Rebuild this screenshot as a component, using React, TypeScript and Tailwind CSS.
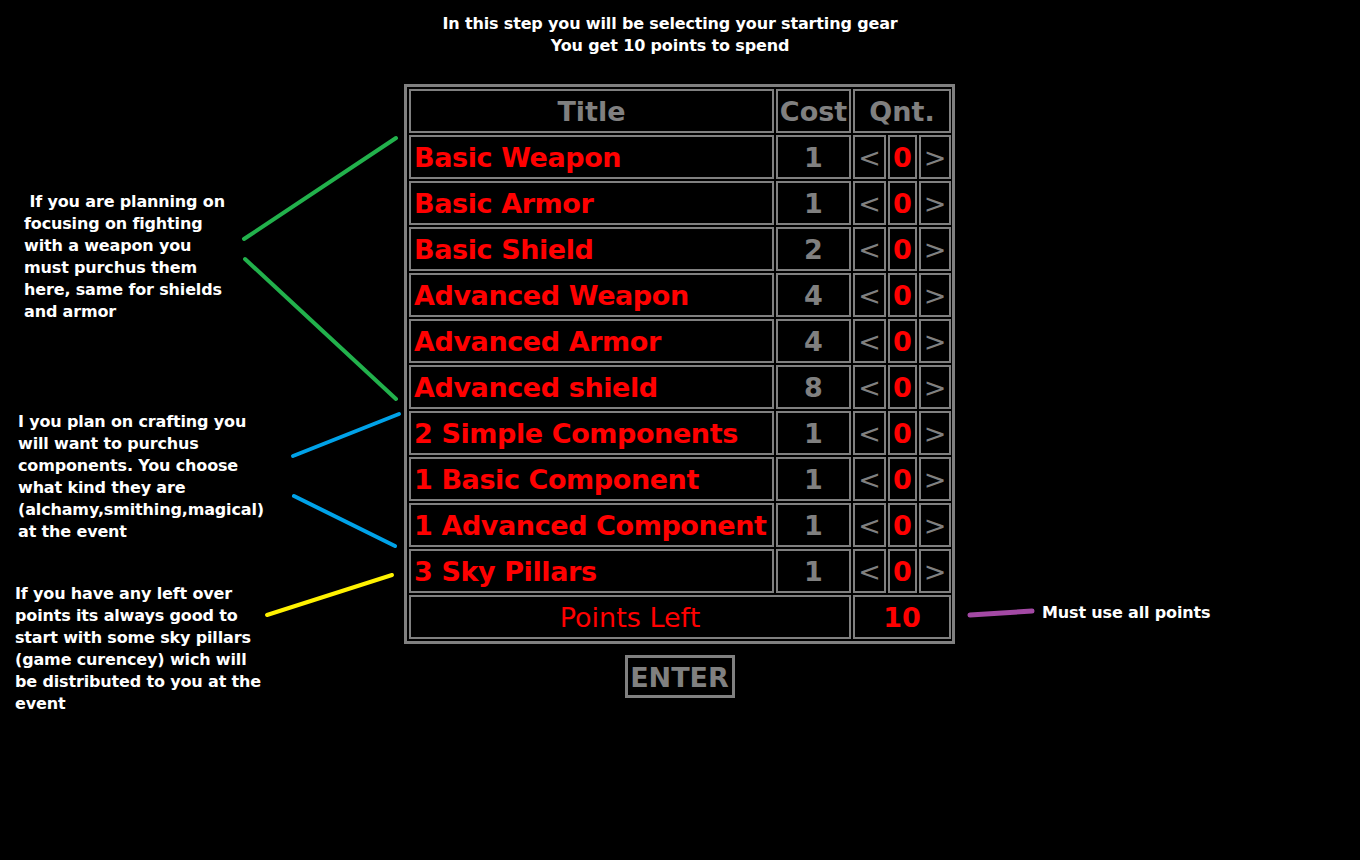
const font = { fontFamily: '"DejaVu Sans", Verdana, sans-serif' };

const items = [
  { name: 'Basic Weapon', cost: 1 },
  { name: 'Basic Armor', cost: 1 },
  { name: 'Basic Shield', cost: 2 },
  { name: 'Advanced Weapon', cost: 4 },
  { name: 'Advanced Armor', cost: 4 },
  { name: 'Advanced shield', cost: 8 },
  { name: '2 Simple Components', cost: 1 },
  { name: '1 Basic Component', cost: 1 },
  { name: '1 Advanced Component', cost: 1 },
  { name: '3 Sky Pillars', cost: 1 },
];

const cell = 'border-2 border-[#808080] flex items-center h-[44px] pt-[3px]';

export default function App() {
  return (
    <div className="relative min-h-screen w-full bg-black text-white overflow-hidden" style={font}>
      {/* heading */}
      <div className="pt-[13px] text-center text-[16px] leading-[22px] font-bold tracking-[-0.15px]">
        <p className="pr-[20px]">In this step you will be selecting your starting gear</p>
        <p className="pr-[20px]">You get 10 points to spend</p>
      </div>

      <div className="mt-[27px] grid grid-cols-[404px_551px_1fr]">
        {/* left notes */}
        <div className="text-[16px] leading-[22px] font-bold tracking-[-0.15px]">
          <p className="mt-[107px] pl-[24px]">
            &nbsp;If you are planning on<br />focusing on fighting<br />with a weapon you<br />must purchus them<br />here, same for shields<br />and armor
          </p>
          <p className="mt-[88px] pl-[18px]">
            I you plan on crafting you<br />will want to purchus<br />components. You choose<br />what kind they are<br />(alchamy,smithing,magical)<br />at the event
          </p>
          <p className="mt-[40px] pl-[15px]">
            If you have any left over<br />points its always good to<br />start with some sky pillars<br />(game curencey) wich will<br />be distributed to you at the<br />event
          </p>
        </div>

        {/* table */}
        <div className="flex flex-col items-center">
          <div className="border-[3px] border-[#808080] pl-[2px] pr-[1px] py-[2px]">
            <div className="grid grid-cols-[365px_75px_33px_29px_32px] gap-[2px] text-[27px] font-bold">
              <div className={`${cell} justify-center text-[#808080]`}>Title</div>
              <div className={`${cell} justify-center text-[#808080]`}>Cost</div>
              <div className={`${cell} col-span-3 justify-center text-[#808080]`}>Qnt.</div>
              {items.map((it) => (
                <div key={it.name} className="contents">
                  <div className={`${cell} pl-[3px] text-[#ff0000] whitespace-nowrap overflow-hidden tracking-[-0.4px]`}>{it.name}</div>
                  <div className={`${cell} justify-center text-[#808080]`}>{it.cost}</div>
                  <div className={`${cell} justify-center text-[#808080] font-normal`}>&lt;</div>
                  <div className={`${cell} justify-center text-[#ff0000]`}>0</div>
                  <div className={`${cell} justify-center text-[#808080] font-normal`}>&gt;</div>
                </div>
              ))}
              <div className={`${cell} col-span-2 justify-center text-[#ff0000] font-normal`}>Points Left</div>
              <div className={`${cell} col-span-3 justify-center text-[#ff0000]`}>10</div>
            </div>
          </div>
          <button className="mt-[11px] h-[43px] w-[110px] border-[3px] border-[#808080] bg-black pt-[2px] text-[27px] font-bold text-[#808080] leading-none" style={font}>
            ENTER
          </button>
        </div>

        {/* right note */}
        <div className="pl-[87px] pt-[518px] text-[16px] leading-[22px] font-bold tracking-[-0.15px]">Must use all points</div>
      </div>

      {/* annotation strokes */}
      <svg className="pointer-events-none absolute left-0 top-0" width="1360" height="860">
        <g strokeWidth="4" strokeLinecap="round" fill="none">
          <line x1="244" y1="239" x2="396" y2="138" stroke="#22b14c" />
          <line x1="245" y1="259" x2="396" y2="399" stroke="#22b14c" />
          <line x1="293" y1="456" x2="399" y2="414" stroke="#00a2e8" />
          <line x1="294" y1="496" x2="395" y2="546" stroke="#00a2e8" />
          <line x1="267" y1="615" x2="392" y2="575" stroke="#fff200" />
          <line x1="970" y1="615" x2="1032" y2="611" stroke="#a349a4" strokeWidth="5" />
        </g>
      </svg>
    </div>
  );
}
